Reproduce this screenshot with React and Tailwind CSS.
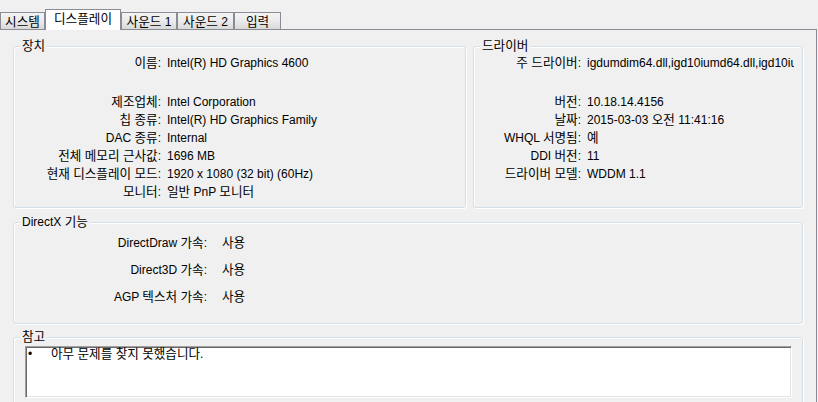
import React from "react";

const FONT = { fontFamily: '"Liberation Sans", "Noto Sans CJK KR", sans-serif' };

function K({ t }) {
  const parts = t.split(/([\uAC00-\uD7A3\u3131-\u318E]+)/);
  return (
    <span>
      {parts.map((p, i) =>
        /[\uAC00-\uD7A3\u3131-\u318E]/.test(p) ? (
          <span key={i} className="text-[12.6px]">
            {p}
          </span>
        ) : (
          <React.Fragment key={i}>{p}</React.Fragment>
        )
      )}
    </span>
  );
}

function Tab({ label, active, w }) {
  if (active) {
    return (
      <div
        className={`relative z-10 -mb-px flex h-[21px] shrink-0 items-start justify-center whitespace-nowrap border-l border-r border-t border-[#898c95] bg-white pt-[2px] text-[12px] leading-[14px] text-black ${w}`}
      >
        <K t={label} />
      </div>
    );
  }
  return (
    <div
      className={`flex h-[17px] shrink-0 items-center justify-center whitespace-nowrap border-l border-r border-t border-[#898c95] bg-gradient-to-b from-[#f4f4f4] via-[#ebebeb] to-[#d9d9d9] pt-[1px] text-[12px] leading-[14px] text-black ${w}`}
    >
      <K t={label} />
    </div>
  );
}

function GroupBox({ title, className, children }) {
  return (
    <div
      className={`relative rounded-[3px] border border-[#d5dfe5] shadow-[inset_1px_1px_0_#fff,1px_1px_0_#fff] ${className}`}
    >
      <span className="absolute -top-[8px] left-[6px] whitespace-nowrap bg-[#f0f0f0] px-[2px] text-[12px] leading-[14px] text-black">
        <K t={title} />
      </span>
      {children}
    </div>
  );
}

function Row({ label, value, lw, gap, h = "h-[18px]" }) {
  return (
    <div className={`flex ${h} text-[12px] leading-[18px] text-black`}>
      <div className={`shrink-0 whitespace-nowrap text-right ${lw}`}>
        <K t={label} />
      </div>
      <div className={`min-w-0 flex-1 overflow-hidden whitespace-nowrap ${gap}`}>
        <K t={value} />
      </div>
    </div>
  );
}

export default function App() {
  return (
    <div className="h-[402px] w-[818px] overflow-hidden bg-[#f0f0f0]" style={FONT}>
      {/* tab strip */}
      <div className="flex h-[29px] items-end">
        <Tab label="시스템" w="w-[45px]" />
        <Tab label="디스플레이" active w="w-[76px]" />
        <Tab label="사운드 1" w="w-[56px]" />
        <Tab label="사운드 2" w="w-[57px]" />
        <Tab label="입력" w="w-[47px]" />
      </div>

      {/* panel */}
      <div className="h-[373px] w-[817px] border-r border-t border-[#898c95] pl-[13px] pr-[13px] pt-[16px]">
        <div className="flex gap-[7px]">
          <GroupBox title="장치" className="h-[162px] w-[453px] shrink-0 pt-[7px]">
            <Row
              label="이름:"
              value="Intel(R) HD Graphics 4600"
              lw="w-[147px]"
              gap="ml-[6px]"
              h="h-[39px]"
            />
            <Row label="제조업체:" value="Intel Corporation" lw="w-[147px]" gap="ml-[6px]" />
            <Row label="칩 종류:" value="Intel(R) HD Graphics Family" lw="w-[147px]" gap="ml-[6px]" />
            <Row label="DAC 종류:" value="Internal" lw="w-[147px]" gap="ml-[6px]" />
            <Row label="전체 메모리 근사값:" value="1696 MB" lw="w-[147px]" gap="ml-[6px]" />
            <Row
              label="현재 디스플레이 모드:"
              value="1920 x 1080 (32 bit) (60Hz)"
              lw="w-[147px]"
              gap="ml-[6px]"
            />
            <Row label="모니터:" value="일반 PnP 모니터" lw="w-[147px]" gap="ml-[6px]" />
          </GroupBox>

          <GroupBox title="드라이버" className="h-[162px] min-w-0 flex-1 pr-[8px] pt-[7px]">
            <Row
              label="주 드라이버:"
              value="igdumdim64.dll,igd10iumd64.dll,igd10iumd64.dll"
              lw="w-[107px]"
              gap="ml-[6px]"
              h="h-[39px]"
            />
            <Row label="버전:" value="10.18.14.4156" lw="w-[107px]" gap="ml-[6px]" />
            <Row label="날짜:" value="2015-03-03 오전 11:41:16" lw="w-[107px]" gap="ml-[6px]" />
            <Row label="WHQL 서명됨:" value="예" lw="w-[107px]" gap="ml-[6px]" />
            <Row label="DDI 버전:" value="11" lw="w-[107px]" gap="ml-[6px]" />
            <Row label="드라이버 모델:" value="WDDM 1.1" lw="w-[107px]" gap="ml-[6px]" />
          </GroupBox>
        </div>

        <GroupBox title="DirectX 기능" className="mt-[14px] h-[102px] pt-[11px]">
          <Row label="DirectDraw 가속:" value="사용" lw="w-[193px]" gap="ml-[15px]" h="h-[27px]" />
          <Row label="Direct3D 가속:" value="사용" lw="w-[193px]" gap="ml-[15px]" h="h-[27px]" />
          <Row label="AGP 텍스처 가속:" value="사용" lw="w-[193px]" gap="ml-[15px]" h="h-[27px]" />
        </GroupBox>

        <GroupBox title="참고" className="mt-[13px] h-[90px] pl-[11px] pr-[10px] pt-[8px]">
          <div className="h-[52px] border border-b-white border-l-[#a0a0a0] border-r-white border-t-[#a0a0a0] bg-white pl-[2px] pt-[1px] shadow-[inset_1px_1px_0_#696969,inset_-1px_-1px_0_#e3e3e3]">
            <div className="flex text-[12px] leading-[12px] text-black">
              <span className="w-[23px] shrink-0">•</span>
              <K t="아무 문제를 찾지 못했습니다." />
            </div>
          </div>
        </GroupBox>
      </div>
    </div>
  );
}
